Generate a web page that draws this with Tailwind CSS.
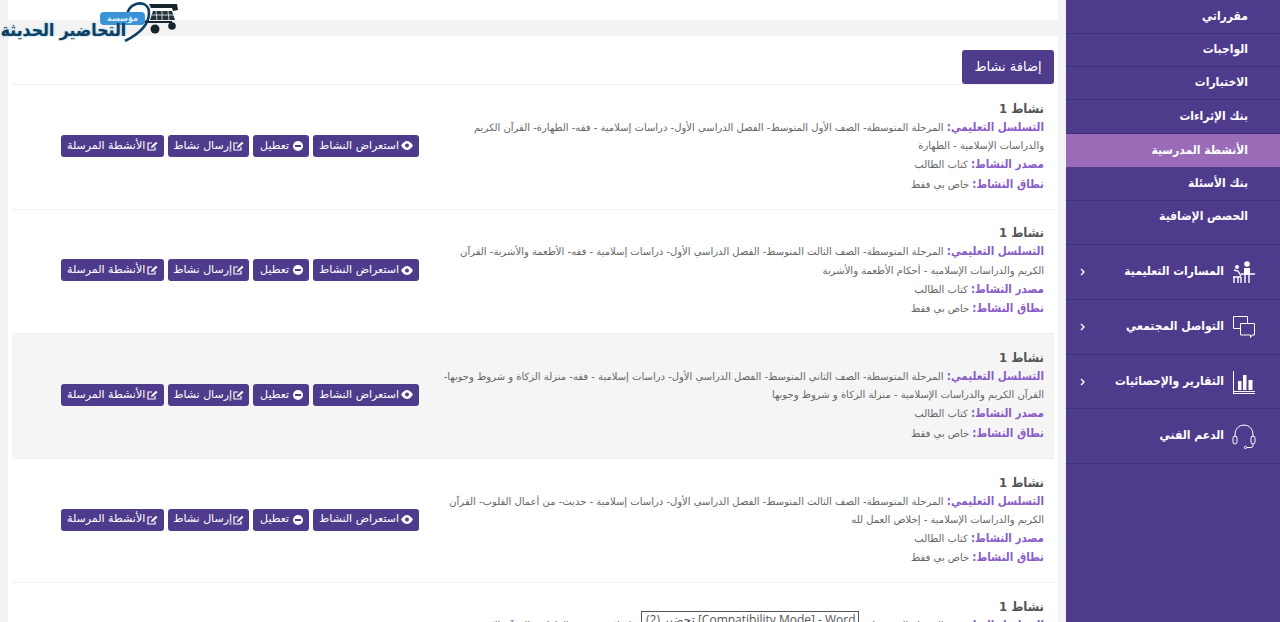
<!DOCTYPE html>
<html lang="ar" dir="rtl">
<head>
  <meta charset="UTF-8">
  <title>الأنشطة المدرسية</title>
  <script src="https://cdn.jsdelivr.net/npm/@tailwindcss/browser@4"></script>
</head>
<body class="h-[622px] overflow-hidden bg-[#f3f3f3] font-['DejaVu_Sans',sans-serif]">
  <div class="relative flex h-[622px] overflow-hidden">

    <!-- sidebar -->
    <aside class="w-[214px] shrink-0 bg-[#4f3b8b] text-white text-[12px] font-bold font-['DejaVu_Sans_Condensed','DejaVu_Sans',sans-serif]">
      <a class="flex h-[34px] items-center border-b border-[#3f2e78] pr-[32px] pb-[2px]">مقرراتي</a>
      <a class="flex h-[33px] items-center border-b border-[#3f2e78] pr-[32px] pb-[2px]">الواجبات</a>
      <a class="flex h-[33px] items-center border-b border-[#3f2e78] pr-[32px] pb-[2px]">الاختبارات</a>
      <a class="flex h-[34px] items-center border-b border-[#3f2e78] pr-[32px] pb-[2px]">بنك الإثراءات</a>
      <a class="flex h-[33px] items-center bg-[#9a6cb8] pr-[32px] pb-[2px]">الأنشطة المدرسية</a>
      <a class="flex h-[34px] items-center border-b border-[#3f2e78] pr-[32px] pb-[2px]">بنك الأسئلة</a>
      <a class="flex h-[44px] items-start border-b border-[#3f2e78] pr-[32px] pt-[6px]">الحصص الإضافية</a>

      <a class="flex h-[55px] items-center gap-[6px] border-b border-[#3f2e78] pr-[24px] whitespace-nowrap">
        <svg class="h-[26px] w-[26px] shrink-0" viewBox="0 0 26 26" fill="none" stroke="white" stroke-width="1.4">
          <circle cx="17" cy="5" r="2.8" fill="white" stroke="none"/>
          <path d="M14 9h6v7h-6z" fill="white" stroke="none"/>
          <path d="M11 15h14M15 16v8M19 16v8"/>
          <circle cx="7" cy="8" r="2" fill="white" stroke="none"/>
          <path d="M4 11l4 1 3 5M3 18h8M4 18v6M8 18v6M11 18v6"/>
        </svg>
        <span class="flex-1 pb-[2px]">المسارات التعليمية</span>
        <svg class="ml-[14px] h-[8px] w-[5px]" viewBox="0 0 5 8" fill="none" stroke="white" stroke-width="1.4"><path d="M1 1l3 3-3 3"/></svg>
      </a>
      <a class="flex h-[55px] items-center gap-[6px] border-b border-[#3f2e78] pr-[24px] whitespace-nowrap">
        <svg class="h-[26px] w-[26px] shrink-0" viewBox="0 0 26 26" fill="none" stroke="white" stroke-width="1">
          <path d="M3.5 14.5V2.5h14v6.500M3.500 14.500H10"/>
          <path d="M10.500 9.500h14v11.500h-2.500l-1.500 2.500v-2.500h-10z"/>
        </svg>
        <span class="flex-1 pb-[2px]">التواصل المجتمعي</span>
        <svg class="ml-[14px] h-[8px] w-[5px]" viewBox="0 0 5 8" fill="none" stroke="white" stroke-width="1.4"><path d="M1 1l3 3-3 3"/></svg>
      </a>
      <a class="flex h-[54px] items-center gap-[6px] border-b border-[#3f2e78] pr-[24px] whitespace-nowrap">
        <svg class="h-[26px] w-[26px] shrink-0" viewBox="0 0 26 26" fill="white">
          <rect x="3" y="2" width="1" height="22"/>
          <rect x="3" y="22" width="22" height="1"/>
          <rect x="3" y="24" width="22" height="1"/>
          <rect x="8" y="12" width="3.500" height="9"/>
          <rect x="13" y="6" width="3.500" height="15"/>
          <rect x="18.500" y="11" width="4" height="10"/>
        </svg>
        <span class="flex-1 pb-[2px]">التقارير والإحصائيات</span>
        <svg class="ml-[14px] h-[8px] w-[5px]" viewBox="0 0 5 8" fill="none" stroke="white" stroke-width="1.4"><path d="M1 1l3 3-3 3"/></svg>
      </a>
      <a class="flex h-[55px] items-center gap-[6px] border-b border-[#3f2e78] pr-[24px] whitespace-nowrap">
        <svg class="h-[26px] w-[26px] shrink-0" viewBox="0 0 26 26" fill="none" stroke="white" stroke-width="1">
          <path d="M5 14v-3a9 9 0 0 1 18 0v3"/>
          <rect x="3" y="13" width="4" height="8" rx="2"/>
          <rect x="21" y="13" width="4" height="8" rx="2"/>
          <path d="M23 21v1.500a2 2 0 0 1-2 2h-4"/>
          <circle cx="15.500" cy="24.500" r="1.200"/>
        </svg>
        <span class="pb-[2px]">الدعم الفني</span>
      </a>
    </aside>

    <!-- main column -->
    <main class="flex-1 px-2">
      <div class="h-5 bg-white"></div>
      <section class="mt-4 h-[600px] bg-white px-1">
        <div class="flex h-[49px] items-end border-b border-[#efefef]">
          <button class="h-[34px] w-[92px] rounded-[3px] bg-[#4f3b8b] text-[13px] text-white">إضافة نشاط</button>
        </div>
        <div id="rows"></div>
      </section>
    </main>

    <!-- logo sits over the page corner -->
    <div class="absolute left-0 top-0 h-[42px] w-[182px]" dir="ltr">
      <svg class="absolute left-[120px] top-0 h-[42px] w-[62px]" viewBox="0 0 62 42" fill="none">
        <path d="M5 41C19 34 29 25 29 13 29 5 23 2 16 4 10 6 7 11 8 15" stroke="#0d3f66" stroke-width="2.6"/>
        <path d="M29 4l28 0 1 6-5 1-1-3H31z" fill="#17252e"/>
        <path d="M33 11h19l3 9H30z" fill="#24343c"/>
        <path d="M36 11l1 9M42 11v9M48 11l1 9M32 15h22" stroke="#eef2f4" stroke-width="0.8"/>
        <path d="M22 21l6 1 24 0" stroke="#17252e" stroke-width="2"/>
        <circle cx="35" cy="29" r="4.500" fill="#17252e"/>
        <circle cx="52" cy="26" r="3.800" fill="#17252e"/>
      </svg>
      <div class="absolute left-[100px] top-[12px] flex h-[13px] w-[45px] items-center justify-center rounded-[4px] bg-[#3a93d6] text-[8px] font-bold text-[#dff2ff]" dir="rtl">مؤسسة</div>
      <div class="absolute left-0 top-[20px] w-[127px] text-center font-['DejaVu_Sans_Condensed','DejaVu_Sans',sans-serif] text-[17.500px] leading-[20px] font-bold whitespace-nowrap text-[#123c5c] [text-shadow:0_0_2px_#5db6e8]" dir="rtl">التحاضير الحديثة</div>
    </div>

    <!-- window title tooltip -->
    <div class="absolute left-[641px] top-[611px] h-[20px] w-[218px] border border-[#555] bg-white px-1 font-['Open_Sans','DejaVu_Sans',sans-serif] text-[12px] leading-[16px] whitespace-nowrap text-[#555]" dir="ltr">تحضير (2) [Compatibility Mode] - Word</div>
  </div>

  <script>
    const eye = '<svg class="h-[9px] w-[12px]" viewBox="0 0 12 9" fill="white"><path d="M0 4.500C2 1.500 4 0 6 0s4 1.500 6 4.500C10 7.500 8 9 6 9S2 7.500 0 4.500z"/><circle cx="6" cy="4.500" r="2" fill="#4f3b8b"/></svg>';
    const minus = '<svg class="h-[10px] w-[10px]" viewBox="0 0 10 10"><circle cx="5" cy="5" r="5" fill="white"/><rect x="2" y="4" width="6" height="2" fill="#4f3b8b"/></svg>';
    const edit = '<svg class="h-[10px] w-[11px]" viewBox="0 0 11 10" fill="none" stroke="white" stroke-width="1.2"><path d="M8 6v3H1V2h4"/><path d="M4 7l.5-2L9 .8l1.500 1.400L6 6.500z" fill="white" stroke="none"/></svg>';

    const btn = (icon, label, spacing) =>
      `<button class="flex h-[22px] items-center ${spacing} rounded-[3px] bg-[#4f3b8b] text-[11px] whitespace-nowrap text-white">${icon}<span>${label}</span></button>`;

    const rows = [
      { path: ['المرحلة المتوسطة- الصف الأول المتوسط- الفصل الدراسي الأول- دراسات إسلامية - فقه- الطهارة- القرآن الكريم', 'والدراسات الإسلامية - الطهارة'] },
      { path: ['المرحلة المتوسطة- الصف الثالث المتوسط- الفصل الدراسي الأول- دراسات إسلامية - فقه- الأطعمة والأشربة- القرآن', 'الكريم والدراسات الإسلامية - أحكام الأطعمة والأشربة'] },
      { path: ['المرحلة المتوسطة- الصف الثاني المتوسط- الفصل الدراسي الأول- دراسات إسلامية - فقه- منزلة الزكاة و شروط وجوبها-', 'القرآن الكريم والدراسات الإسلامية - منزلة الزكاة و شروط وجوبها'], bg: 'bg-[#f5f5f5]' },
      { path: ['المرحلة المتوسطة- الصف الثالث المتوسط- الفصل الدراسي الأول- دراسات إسلامية - حديث- من أعمال القلوب- القرآن', 'الكريم والدراسات الإسلامية - إخلاص العمل لله'] },
      { path: ['المرحلة المتوسطة- الصف الأول المتوسط- الفصل الدراسي الأول- دراسات إسلامية - فقه- الطهارة- القرآن الكريم', 'والدراسات الإسلامية - الطهارة'] },
    ];

    document.getElementById('rows').innerHTML = rows.map(r => `
      <div class="flex h-[124.6px] items-center border-b border-[#efefef] pr-[10px] ${r.bg || ''}">
        <div class="w-[625px] shrink-0 text-[10px] leading-[18.200px] whitespace-nowrap text-[#666]">
          <div class="font-['DejaVu_Sans_Condensed','DejaVu_Sans',sans-serif] text-[13px] leading-[18px] font-bold text-[#555]">نشاط 1</div>
          <div><b class="font-['DejaVu_Sans_Condensed','DejaVu_Sans',sans-serif] text-[11.500px] text-[#8a5cc7]">التسلسل التعليمي:</b> ${r.path[0]}</div>
          <div>${r.path[1]}</div>
          <div><b class="font-['DejaVu_Sans_Condensed','DejaVu_Sans',sans-serif] text-[11.500px] text-[#8a5cc7]">مصدر النشاط:</b> كتاب الطالب</div>
          <div><b class="font-['DejaVu_Sans_Condensed','DejaVu_Sans',sans-serif] text-[11.500px] text-[#8a5cc7]">نطاق النشاط:</b> خاص بي فقط</div>
        </div>
        <div class="mb-[2px] flex gap-1">
          ${btn(eye, 'استعراض النشاط', 'gap-[2px] px-[6px]')}${btn(minus, 'تعطيل', 'gap-[4px] pr-[6px] pl-[7px]')}${btn(edit, 'إرسال نشاط', 'gap-[1px] px-[5px]')}${btn(edit, 'الأنشطة المرسلة', 'gap-[2px] px-[6px]')}
        </div>
      </div>`).join('');
  </script>
</body>
</html>
